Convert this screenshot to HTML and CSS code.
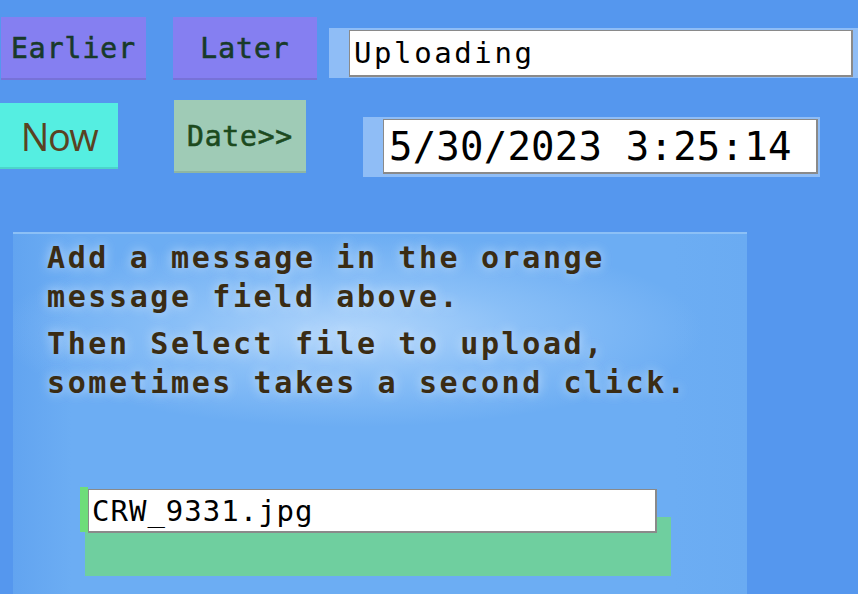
FILE: index.html
```html
<!DOCTYPE html>
<html>
<head>
<meta charset="utf-8">
<link rel="stylesheet" href="styles.css">
</head>
<body>
<div class="page">
  <div class="row row1">
    <button class="btn btn-purple btn-earlier">Earlier</button>
    <button class="btn btn-purple btn-later">Later</button>
    <div class="strip strip-msg"><input class="field field-msg" type="text" value="Uploading"></div>
  </div>
  <div class="row row2">
    <button class="btn btn-now">Now</button>
    <button class="btn btn-date">Date&gt;&gt;</button>
    <div class="strip strip-date"><input class="field field-date" type="text" value="5/30/2023 3:25:14"></div>
  </div>
  <div class="panel">
    <div class="glow">
      <p class="msg">Add a message in the orange<br>message field above.</p>
      <p class="msg">Then Select file to upload,<br>sometimes takes a second click.</p>
    </div>
    <div class="file">
      <div class="file-row">
        <span class="file-stripe"></span>
        <input class="field field-file" type="text" value="CRW_9331.jpg">
      </div>
      <div class="file-box"></div>
    </div>
  </div>
</div>
</body>
</html>
```
FILE: styles.css
```css
html, body {
  margin: 0;
  padding: 0;
  background: #5597ee;
  overflow: hidden;
}
.page {
  width: 858px;
  height: 594px;
  overflow: hidden;
}
.row {
  display: flex;
  align-items: flex-start;
}
.row1 {
  padding-top: 17px;
  height: 83px;
}
.row2 {
  height: 132px;
}
.btn {
  border: none;
  margin: 0;
  padding: 0;
  font-family: "DejaVu Sans Mono", monospace;
  box-shadow: inset 0 -2px 0 rgba(0,0,0,0.10);
  cursor: pointer;
  -webkit-text-stroke: 0.6px currentColor;
}
.btn-purple {
  background: #857ff1;
  color: #183a2a;
  height: 63px;
  font-size: 28px;
  letter-spacing: 1px;
}
.btn-earlier {
  margin-left: 1px;
  width: 145px;
}
.btn-later {
  margin-left: 27px;
  width: 144px;
}
.strip {
  background: #8fbdf6;
  box-sizing: border-box;
}
.strip-msg {
  margin-left: 12px;
  margin-top: 11px;
  width: 529px;
  height: 50px;
  padding: 2px 0 0 20px;
}
.field {
  display: block;
  box-sizing: border-box;
  background: #fff;
  border: 1px solid #8a8a8a;
  border-right-width: 2px;
  border-bottom-width: 2px;
  margin: 0;
  color: #000;
  font-family: "DejaVu Sans Mono", monospace;
  outline: none;
}
.field-msg {
  width: 504px;
  height: 47px;
  font-size: 29px;
  letter-spacing: 2.6px;
  padding: 0 0 0 4px;
}
.btn-now {
  margin-top: 3px;
  width: 118px;
  height: 66px;
  background: #55eee1;
  color: #5a4222;
  font-family: "Open Sans", "Noto Sans", sans-serif;
  font-size: 38px;
  letter-spacing: -1.5px;
  -webkit-text-stroke: 0;
}
.btn-date {
  margin-left: 56px;
  width: 132px;
  height: 73px;
  background: #9fcbb6;
  color: #1c4a1e;
  font-size: 28px;
  letter-spacing: 0.8px;
}
.strip-date {
  margin-left: 57px;
  margin-top: 17px;
  width: 457px;
  height: 60px;
  padding: 2px 0 0 20px;
}
.field-date {
  width: 435px;
  height: 55px;
  font-size: 39px;
  letter-spacing: 0.2px;
  padding: 0 0 0 5px;
}
.panel {
  margin-left: 13px;
  width: 734px;
  height: 362px;
  background: linear-gradient(90deg, #62a4f0 0%, #6cadf3 8%, #6cadf3 90%, #6aabf2 100%);
  border-top: 2px solid #8cc0f6;
  box-sizing: border-box;
  overflow: hidden;
}
.glow {
  padding: 4px 0 25px 34px;
  background: radial-gradient(ellipse 48% 48% at 46% 48%, rgba(195,224,253,0.8) 0%, rgba(160,205,250,0.55) 50%, rgba(108,173,243,0) 100%);
}
.msg {
  margin: 0 0 8px 0;
  font-family: "DejaVu Sans Mono", monospace;
  font-weight: bold;
  font-size: 30px;
  line-height: 39px;
  letter-spacing: 2.6px;
  color: #3a2c14;
  text-shadow: 0 0 12px rgba(220,236,255,0.8);
}
.file {
  margin-left: 67px;
  margin-top: 52px;
}
.file-row {
  display: flex;
  align-items: flex-start;
}
.file-stripe {
  width: 8px;
  height: 45px;
  background: #6edd7a;
}
.field-file {
  position: relative;
  z-index: 1;
  margin-top: 2px;
  width: 569px;
  height: 44px;
  font-size: 29px;
  letter-spacing: 1px;
  padding: 0 0 0 3px;
}
.file-box {
  margin-left: 5px;
  margin-top: -16px;
  width: 586px;
  height: 59px;
  background: #6fcf9f;
}
```
